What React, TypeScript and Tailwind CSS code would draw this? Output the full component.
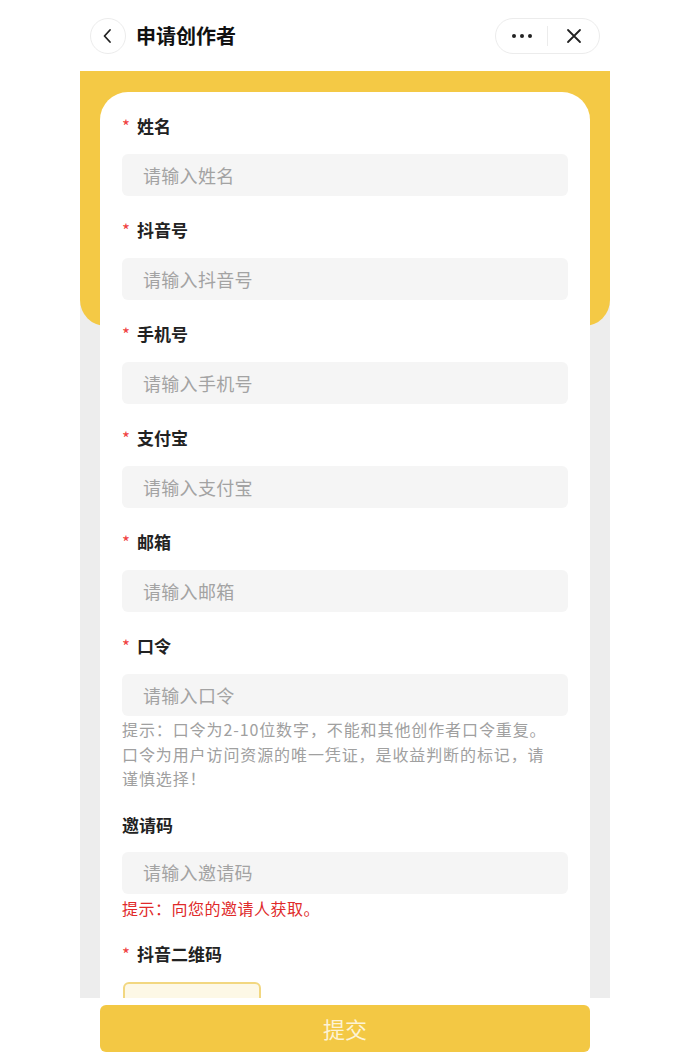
import React from "react";

const font = { fontFamily: '"Noto Sans CJK SC", "Noto Sans", sans-serif' };

function Label({ text, required = true }: { text: string; required?: boolean }) {
  return (
    <div className="flex items-center h-[24px] text-[17px] font-bold text-[#222]">
      {required && <span className="text-[#f04040] text-[17px] mr-[7px] font-normal">*</span>}
      <span>{text}</span>
    </div>
  );
}

function Input({ placeholder }: { placeholder: string }) {
  return (
    <div className="mt-[16px] h-[42px] rounded-[6px] bg-[#f5f5f5] flex items-center pl-[21px] text-[18px] text-[#a3a3a3] tracking-[0.3px]">
      {placeholder}
    </div>
  );
}

export default function App() {
  const fields = [
    ["姓名", "请输入姓名"],
    ["抖音号", "请输入抖音号"],
    ["手机号", "请输入手机号"],
    ["支付宝", "请输入支付宝"],
    ["邮箱", "请输入邮箱"],
  ];
  return (
    <div className="w-[690px] h-[1062px] bg-white flex flex-col overflow-hidden" style={font}>
      <div className="w-[530px] mx-auto h-[71px] shrink-0 flex items-center justify-between px-[10px]">
        <div className="flex items-center">
          <div className="w-[36px] h-[36px] rounded-full border border-[#ececec] flex items-center justify-center">
            <svg width="14" height="16" viewBox="0 0 14 16" fill="none">
              <path d="M9 2 L3.5 8 L9 14" stroke="#222" strokeWidth="1.8" strokeLinecap="round" strokeLinejoin="round" />
            </svg>
          </div>
          <div className="ml-[10px] text-[20px] font-semibold text-[#111]">申请创作者</div>
        </div>
        <div className="w-[105px] h-[36px] rounded-full border border-[#ececec] flex items-center">
          <div className="flex-1 flex items-center justify-center gap-[4px]">
            <span className="w-[4px] h-[4px] rounded-full bg-[#222]" />
            <span className="w-[4px] h-[4px] rounded-full bg-[#222]" />
            <span className="w-[4px] h-[4px] rounded-full bg-[#222]" />
          </div>
          <div className="w-px h-[20px] bg-[#ececec]" />
          <div className="flex-1 flex items-center justify-center">
            <svg width="16" height="16" viewBox="0 0 16 16" fill="none">
              <path d="M2 2 L14 14 M14 2 L2 14" stroke="#222" strokeWidth="1.8" strokeLinecap="round" />
            </svg>
          </div>
        </div>
      </div>

      <div className="w-[530px] mx-auto flex-1 bg-[#ededed] relative overflow-hidden">
        <div className="absolute left-0 top-0 w-full h-[255px] bg-[#f4c945] rounded-b-[26px]" />
        <div className="relative mx-[20px] mt-[21px] bg-white rounded-t-[28px] px-[22px] pt-[22px]">
          {fields.map(([l, p]) => (
            <div key={l} className="mb-[22px]">
              <Label text={l} />
              <Input placeholder={p} />
            </div>
          ))}
          <div>
            <Label text="口令" />
            <Input placeholder="请输入口令" />
            <div className="mt-[1px] text-[16px] leading-[24.5px] text-[#a0a0a0] tracking-[0.9px] whitespace-nowrap">
              提示：口令为2-10位数字，不能和其他创作者口令重复。
              <br />
              口令为用户访问资源的唯一凭证，是收益判断的标记，请
              <br />
              谨慎选择！
            </div>
          </div>
          <div className="mt-[22px]">
            <Label text="邀请码" required={false} />
            <div className="mt-[15px] h-[42px] rounded-[6px] bg-[#f5f5f5] flex items-center pl-[21px] text-[18px] text-[#a3a3a3] tracking-[0.3px]">
              请输入邀请码
            </div>
            <div className="mt-[2px] text-[16px] leading-[24px] text-[#e02a2a] tracking-[0.5px]">提示：向您的邀请人获取。</div>
          </div>
          <div className="mt-[22px]">
            <Label text="抖音二维码" />
            <div className="mt-[16px] ml-[1px] w-[138px] h-[138px] rounded-[6px] border-2 border-[#f2d780] bg-[#fdf8e6]" />
          </div>
        </div>
      </div>

      <div className="w-[530px] mx-auto h-[64px] shrink-0 px-[20px] pt-[7px]">
        <div className="h-[47px] rounded-[6px] bg-[#f3c844] flex items-center justify-center text-[22px] leading-[30px] pb-[2px] text-[#fdf3d6]">
          提交
        </div>
      </div>
    </div>
  );
}
